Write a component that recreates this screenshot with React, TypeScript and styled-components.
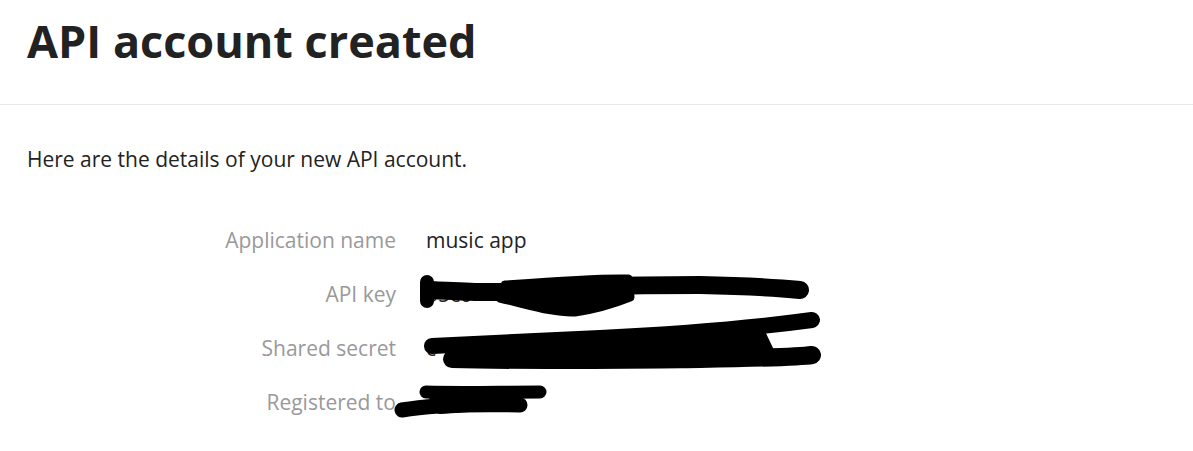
import styled, { createGlobalStyle } from "styled-components";

const GlobalStyle = createGlobalStyle`
  body {
    margin: 0;
    background: #ffffff;
    font-family: "Open Sans", "Noto Sans", sans-serif;
    color: #222222;
  }
`;

const rows = [
  { label: "Application name", value: "music app" },
  { label: "API key", value: "55c0" },
  { label: "Shared secret", value: "c" },
  { label: "Registered to", value: "" },
];

export default function App() {
  return (
    <>
      <GlobalStyle />
      <Header>
        <Title>API account created</Title>
      </Header>
      <Content>
        <Intro>Here are the details of your new API account.</Intro>
        <Details>
          {rows.map((r) => (
            <Row key={r.label}>
              <Label>{r.label}</Label>
              <Value>{r.value}</Value>
            </Row>
          ))}
          <Redactions width="1193" height="260" viewBox="0 213 1193 260">
            {/* API key */}
            <path
              d="M427 283 L427 302"
              stroke="#000"
              strokeWidth="14"
              strokeLinecap="round"
            />
            <path
              d="M430 291 C470 293 490 294 520 292 C560 288 620 286 700 286 C750 287 780 289 800 291"
              stroke="#000"
              strokeWidth="18"
              strokeLinecap="round"
              fill="none"
            />
            <path
              d="M500 299 C530 306 555 314 575 313 C595 310 615 304 630 298 L628 280 C600 279 560 282 505 286 Z"
              fill="#000"
              stroke="#000"
              strokeWidth="9"
              strokeLinejoin="round"
            />
            {/* Shared secret */}
            <path
              d="M432 347 C480 345 530 342 600 339 C680 335 760 328 812 321"
              stroke="#000"
              strokeWidth="16"
              strokeLinecap="round"
              fill="none"
            />
            <path
              d="M452 360 C520 362 600 361 700 360 C760 359 800 358 812 356"
              stroke="#000"
              strokeWidth="18"
              strokeLinecap="round"
              fill="none"
            />
            <path
              d="M470 342 L760 331 L770 352 L470 356 Z"
              fill="#000"
              stroke="#000"
              strokeWidth="8"
              strokeLinejoin="round"
            />
            {/* Registered to */}
            <path
              d="M426 393 C460 394 500 393 540 393"
              stroke="#000"
              strokeWidth="13"
              strokeLinecap="round"
              fill="none"
            />
            <path
              d="M402 411 C430 406 470 405 520 406"
              stroke="#000"
              strokeWidth="15"
              strokeLinecap="round"
              fill="none"
            />
            <path
              d="M432 393 L518 396 L512 405 L440 410 Z"
              fill="#000"
              stroke="#000"
              strokeWidth="10"
              strokeLinejoin="round"
            />
          </Redactions>
        </Details>
      </Content>
    </>
  );
}

const Header = styled.header`
  padding: 11px 27px 33px;
  border-bottom: 1px solid #e8e8e8;
`;

const Title = styled.h1`
  margin: 0;
  font-size: 45px;
  line-height: 60px;
  font-weight: 700;
  color: #222222;
`;

const Content = styled.main`
  padding: 42px 27px 0;
`;

const Intro = styled.p`
  margin: 0 0 42px;
  font-size: 21px;
  line-height: 24px;
  color: #222222;
`;

const Details = styled.dl`
  position: relative;
  margin: 0;
  display: flex;
  flex-direction: column;
`;

const Row = styled.div`
  display: grid;
  grid-template-columns: 369px 1fr;
  column-gap: 30px;
  height: 54px;
  align-items: center;
  font-size: 21px;
`;

const Label = styled.dt`
  text-align: right;
  color: #999999;
`;

const Value = styled.dd`
  margin: 0;
  color: #222222;
`;

const Redactions = styled.svg`
  position: absolute;
  left: -27px;
  top: -1px;
  pointer-events: none;
`;
